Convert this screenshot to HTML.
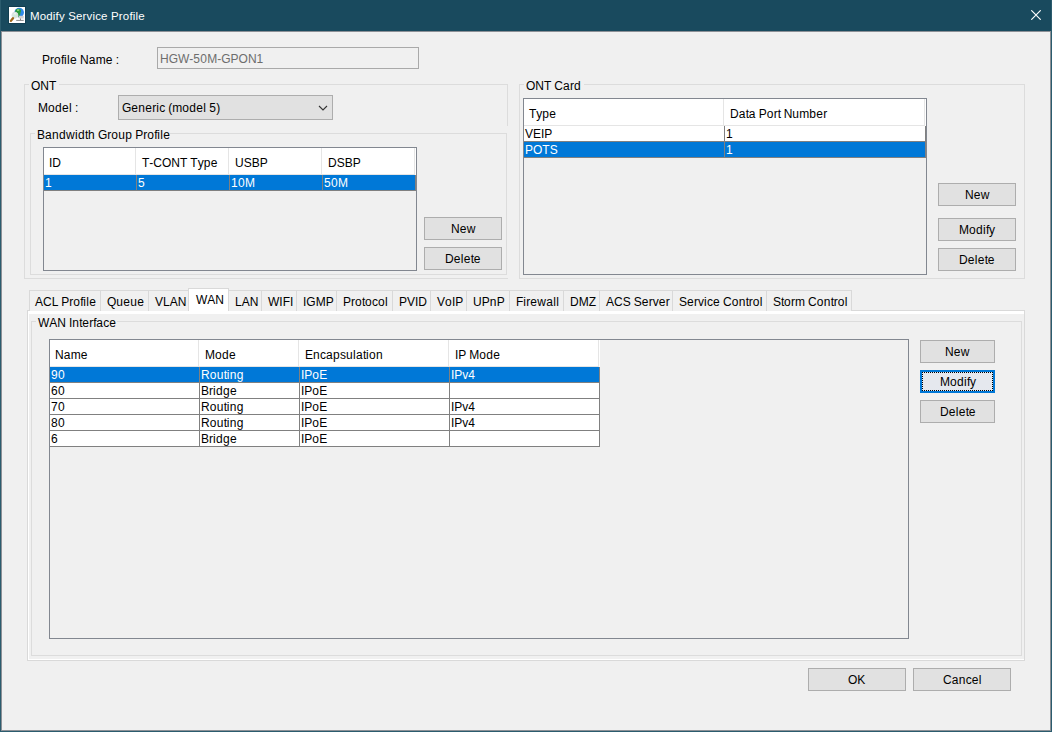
<!DOCTYPE html>
<html><head><meta charset="utf-8">
<style>
*{box-sizing:border-box;margin:0;padding:0}
html,body{width:1052px;height:732px;overflow:hidden;background:#f0f0f0;font-family:"Liberation Sans",sans-serif;font-size:12px;color:#000}
.a{position:absolute}
.t{position:absolute;line-height:14px;white-space:nowrap;font-kerning:none}
i{display:inline-block;font-style:normal;overflow:visible}
</style></head><body>
<div class="a" style="left:0px;top:0px;width:1052px;height:31px;background:#194a5e;"></div>
<div class="a" style="left:0px;top:0px;width:1px;height:732px;background:#2b5c6e;"></div>
<div class="a" style="left:1051px;top:0px;width:1px;height:732px;background:#2b5c6e;"></div>
<div class="a" style="left:0px;top:731px;width:1052px;height:1px;background:#2b5c6e;"></div>
<div class="a" style="left:1px;top:31px;width:1px;height:700px;background:#8c9096;"></div>
<div class="a" style="left:1050px;top:31px;width:1px;height:700px;background:#8c9096;"></div>
<div class="a" style="left:1px;top:31px;width:1050px;height:1px;background:#8c9096;"></div>
<div class="a" style="left:1px;top:730px;width:1050px;height:1px;background:#8c9096;"></div>
<svg class="a" style="left:8px;top:6px" width="18" height="18" viewBox="0 0 18 18">
<rect x="0" y="0" width="18" height="18" fill="#113e50"/>
<rect x="1" y="1" width="16" height="16" fill="#fff"/>
<circle cx="11.2" cy="6.6" r="4.8" fill="#2d8ae8"/>
<path d="M7.6 4.2 C8.6 3 10.2 2.6 11.6 2.9 C13 3.3 13.4 4.6 12.8 5.8 C12.3 6.8 12.6 7.6 12 8.8 C11.5 10 10.8 11 10.2 11.3 C9.6 10.4 9.2 9.6 8.4 9 C7.6 8.2 7.2 7 7.2 5.8 C7.2 5.2 7.3 4.6 7.6 4.2Z" fill="#2a9a3a"/>
<path d="M9 3.6 C10 3 11.2 3.1 11.6 3.8 C11.2 4.8 10.2 5.2 9.2 5Z" fill="#8ed67c"/>
<circle cx="6.9" cy="9.2" r="3" fill="#d2e8dc" stroke="#dfe4e6" stroke-width="1"/>
<path d="M5.8 8.2 C6.4 7.6 7.4 7.6 7.9 8.1" stroke="#fff" stroke-width="1" fill="none"/>
<path d="M5 12.2 L2.9 14.9" stroke="#a0681a" stroke-width="2.3" stroke-linecap="round"/>
<rect x="10.6" y="9.8" width="5.1" height="2.7" fill="#d0d0d0"/>
<rect x="12" y="12.5" width="1" height="1.4" fill="#777"/>
<rect x="8.2" y="13.9" width="7.5" height="0.9" fill="#7a7a7a"/>
</svg>
<div class="t" style="left:30px;top:9px;color:#fff;font-size:11.5px;letter-spacing:0.16px;">Modify Service Profile</div>
<svg class="a" style="left:1031px;top:10px" width="10" height="10" viewBox="0 0 10 10">
<path d="M0.3 0.3 L9.7 9.7 M9.7 0.3 L0.3 9.7" stroke="#fff" stroke-width="1.15"/>
</svg>
<div class="t" style="left:42px;top:53px;"><i style="width:8.004px">P</i><i style="width:4px">r</i><i style="width:7px">o</i><i style="width:3px">f</i><i style="width:3px">i</i><i style="width:3px">l</i><i style="width:7px">e</i><i style="width:3px">&nbsp;</i><i style="width:8.666px">N</i><i style="width:7px">a</i><i style="width:10px">m</i><i style="width:7px">e</i><i style="width:3px">&nbsp;</i><i style="width:3px">:</i></div>
<div class="a" style="left:157px;top:47px;width:262px;height:22px;border:1px solid #a9a9a9;background:#f0f0f0;"></div>
<div class="t" style="left:160px;top:52px;color:#6d6d6d;"><i style="width:8.666px">H</i><i style="width:9.334px">G</i><i style="width:11.326px">W</i><i style="width:4px">-</i><i style="width:7px">5</i><i style="width:7px">0</i><i style="width:9.996px">M</i><i style="width:4px">-</i><i style="width:9.334px">G</i><i style="width:8.004px">P</i><i style="width:9.334px">O</i><i style="width:8.666px">N</i><i style="width:7px">1</i></div>
<div class="a" style="left:24px;top:84px;width:484px;height:195px;border:1px solid #dcdcdc;"></div>
<div class="a" style="left:29px;top:84px;width:30px;height:1px;background:#f0f0f0;"></div>
<div class="t" style="left:31px;top:79px;"><i style="width:9.334px">O</i><i style="width:8.666px">N</i><i style="width:7.33px">T</i></div>
<div class="t" style="left:38px;top:101px;"><i style="width:9.996px">M</i><i style="width:7px">o</i><i style="width:7px">d</i><i style="width:7px">e</i><i style="width:3px">l</i><i style="width:3px">&nbsp;</i><i style="width:3px">:</i></div>
<div class="a" style="left:118px;top:95px;width:215px;height:25px;border:1px solid #adadad;background:#e1e1e1;"></div>
<div class="t" style="left:122px;top:101px;"><i style="width:9.334px">G</i><i style="width:7px">e</i><i style="width:7px">n</i><i style="width:7px">e</i><i style="width:4px">r</i><i style="width:3px">i</i><i style="width:6px">c</i><i style="width:3px">&nbsp;</i><i style="width:4px">(</i><i style="width:10px">m</i><i style="width:7px">o</i><i style="width:7px">d</i><i style="width:7px">e</i><i style="width:3px">l</i><i style="width:3px">&nbsp;</i><i style="width:7px">5</i><i style="width:4px">)</i></div>
<svg class="a" style="left:318px;top:105px" width="10" height="7" viewBox="0 0 10 7"><path d="M1 1 L5 5 L9 1" fill="none" stroke="#333" stroke-width="1.1"/></svg>
<div class="a" style="left:507px;top:126px;width:1px;height:152px;background:#f0f0f0;"></div>
<div class="a" style="left:30px;top:133px;width:477px;height:142px;border:1px solid #dcdcdc;"></div>
<div class="a" style="left:35px;top:133px;width:135px;height:1px;background:#f0f0f0;"></div>
<div class="t" style="left:37px;top:128px;"><i style="width:8.004px">B</i><i style="width:7px">a</i><i style="width:7px">n</i><i style="width:7px">d</i><i style="width:9px">w</i><i style="width:3px">i</i><i style="width:7px">d</i><i style="width:3px">t</i><i style="width:7px">h</i><i style="width:3px">&nbsp;</i><i style="width:9.334px">G</i><i style="width:4px">r</i><i style="width:7px">o</i><i style="width:7px">u</i><i style="width:7px">p</i><i style="width:3px">&nbsp;</i><i style="width:8.004px">P</i><i style="width:4px">r</i><i style="width:7px">o</i><i style="width:3px">f</i><i style="width:3px">i</i><i style="width:3px">l</i><i style="width:7px">e</i></div>
<div class="a" style="left:43px;top:147px;width:374px;height:124px;border:1px solid #828790;background:#f0f0f0;"></div>
<div class="a" style="left:44px;top:148px;width:372px;height:27px;background:#fff;"></div>
<div class="a" style="left:135px;top:148px;width:1px;height:26px;background:#e5e5e5;"></div>
<div class="t" style="left:49px;top:156px;"><i style="width:3.334px">I</i><i style="width:8.666px">D</i></div>
<div class="a" style="left:228px;top:148px;width:1px;height:26px;background:#e5e5e5;"></div>
<div class="t" style="left:142px;top:156px;"><i style="width:7.33px">T</i><i style="width:4px">-</i><i style="width:8.666px">C</i><i style="width:9.334px">O</i><i style="width:8.666px">N</i><i style="width:7.33px">T</i><i style="width:3px">&nbsp;</i><i style="width:7.33px">T</i><i style="width:6px">y</i><i style="width:7px">p</i><i style="width:7px">e</i></div>
<div class="a" style="left:321px;top:148px;width:1px;height:26px;background:#e5e5e5;"></div>
<div class="t" style="left:235px;top:156px;"><i style="width:8.666px">U</i><i style="width:8.004px">S</i><i style="width:8.004px">B</i><i style="width:8.004px">P</i></div>
<div class="a" style="left:414px;top:148px;width:1px;height:26px;background:#e5e5e5;"></div>
<div class="t" style="left:328px;top:156px;"><i style="width:8.666px">D</i><i style="width:8.004px">S</i><i style="width:8.004px">B</i><i style="width:8.004px">P</i></div>
<div class="a" style="left:44px;top:174px;width:371px;height:1px;background:#e5e5e5;"></div>
<div class="a" style="left:44px;top:175px;width:372px;height:16px;background:#0078d7;"></div>
<div class="a" style="left:136px;top:175px;width:1px;height:16px;background:#808080;"></div>
<div class="t" style="left:45px;top:176px;color:#fff;"><i style="width:7px">1</i></div>
<div class="a" style="left:229px;top:175px;width:1px;height:16px;background:#808080;"></div>
<div class="t" style="left:138px;top:176px;color:#fff;"><i style="width:7px">5</i></div>
<div class="a" style="left:322px;top:175px;width:1px;height:16px;background:#808080;"></div>
<div class="t" style="left:231px;top:176px;color:#fff;"><i style="width:7px">1</i><i style="width:7px">0</i><i style="width:9.996px">M</i></div>
<div class="a" style="left:415px;top:175px;width:1px;height:16px;background:#808080;"></div>
<div class="t" style="left:324px;top:176px;color:#fff;"><i style="width:7px">5</i><i style="width:7px">0</i><i style="width:9.996px">M</i></div>
<div class="a" style="left:44px;top:190px;width:372px;height:1px;background:#808080;"></div>
<div class="a" style="left:424px;top:217px;width:78px;height:23px;border:1px solid #adadad;background:#e1e1e1;"></div>
<div class="t" style="left:451px;top:222px;"><i style="width:8.666px">N</i><i style="width:7px">e</i><i style="width:9px">w</i></div>
<div class="a" style="left:424px;top:247px;width:78px;height:23px;border:1px solid #adadad;background:#e1e1e1;"></div>
<div class="t" style="left:445px;top:252px;"><i style="width:8.666px">D</i><i style="width:7px">e</i><i style="width:3px">l</i><i style="width:7px">e</i><i style="width:3px">t</i><i style="width:7px">e</i></div>
<div class="a" style="left:519px;top:84px;width:506px;height:195px;border:1px solid #dcdcdc;"></div>
<div class="a" style="left:524px;top:84px;width:60px;height:1px;background:#f0f0f0;"></div>
<div class="t" style="left:526px;top:79px;"><i style="width:9.334px">O</i><i style="width:8.666px">N</i><i style="width:7.33px">T</i><i style="width:3px">&nbsp;</i><i style="width:8.666px">C</i><i style="width:7px">a</i><i style="width:4px">r</i><i style="width:7px">d</i></div>
<div class="a" style="left:523px;top:98px;width:404px;height:177px;border:1px solid #828790;background:#f0f0f0;"></div>
<div class="a" style="left:524px;top:99px;width:402px;height:27px;background:#fff;"></div>
<div class="a" style="left:723px;top:99px;width:1px;height:26px;background:#e5e5e5;"></div>
<div class="t" style="left:529px;top:107px;"><i style="width:7.33px">T</i><i style="width:6px">y</i><i style="width:7px">p</i><i style="width:7px">e</i></div>
<div class="a" style="left:924px;top:99px;width:1px;height:26px;background:#e5e5e5;"></div>
<div class="t" style="left:730px;top:107px;"><i style="width:8.666px">D</i><i style="width:7px">a</i><i style="width:3px">t</i><i style="width:7px">a</i><i style="width:3px">&nbsp;</i><i style="width:8.004px">P</i><i style="width:7px">o</i><i style="width:4px">r</i><i style="width:3px">t</i><i style="width:3px">&nbsp;</i><i style="width:8.666px">N</i><i style="width:7px">u</i><i style="width:10px">m</i><i style="width:7px">b</i><i style="width:7px">e</i><i style="width:4px">r</i></div>
<div class="a" style="left:524px;top:125px;width:401px;height:1px;background:#e5e5e5;"></div>
<div class="a" style="left:524px;top:126px;width:402px;height:16px;background:#fff;"></div>
<div class="a" style="left:724px;top:126px;width:1px;height:16px;background:#808080;"></div>
<div class="t" style="left:525px;top:127px;color:#000;"><i style="width:8.004px">V</i><i style="width:8.004px">E</i><i style="width:3.334px">I</i><i style="width:8.004px">P</i></div>
<div class="a" style="left:925px;top:126px;width:1px;height:16px;background:#808080;"></div>
<div class="t" style="left:726px;top:127px;color:#000;"><i style="width:7px">1</i></div>
<div class="a" style="left:524px;top:141px;width:402px;height:1px;background:#808080;"></div>
<div class="a" style="left:524px;top:142px;width:402px;height:16px;background:#0078d7;"></div>
<div class="a" style="left:724px;top:142px;width:1px;height:16px;background:#808080;"></div>
<div class="t" style="left:525px;top:143px;color:#fff;"><i style="width:8.004px">P</i><i style="width:9.334px">O</i><i style="width:7.33px">T</i><i style="width:8.004px">S</i></div>
<div class="a" style="left:925px;top:142px;width:1px;height:16px;background:#808080;"></div>
<div class="t" style="left:726px;top:143px;color:#fff;"><i style="width:7px">1</i></div>
<div class="a" style="left:524px;top:157px;width:402px;height:1px;background:#808080;"></div>
<div class="a" style="left:938px;top:183px;width:78px;height:23px;border:1px solid #adadad;background:#e1e1e1;"></div>
<div class="t" style="left:965px;top:188px;"><i style="width:8.666px">N</i><i style="width:7px">e</i><i style="width:9px">w</i></div>
<div class="a" style="left:938px;top:218px;width:78px;height:23px;border:1px solid #adadad;background:#e1e1e1;"></div>
<div class="t" style="left:959px;top:223px;"><i style="width:9.996px">M</i><i style="width:7px">o</i><i style="width:7px">d</i><i style="width:3px">i</i><i style="width:3px">f</i><i style="width:6px">y</i></div>
<div class="a" style="left:938px;top:248px;width:78px;height:23px;border:1px solid #adadad;background:#e1e1e1;"></div>
<div class="t" style="left:959px;top:253px;"><i style="width:8.666px">D</i><i style="width:7px">e</i><i style="width:3px">l</i><i style="width:7px">e</i><i style="width:3px">t</i><i style="width:7px">e</i></div>
<div class="a" style="left:27px;top:310px;width:998px;height:351px;border:1px solid #d9d9d9;background:#f0f0f0;"></div>
<div class="a" style="left:28px;top:311px;width:996px;height:3px;background:#fff;"></div>
<div class="a" style="left:28px;top:311px;width:1px;height:349px;background:#fff;"></div>
<div class="a" style="left:28px;top:659px;width:996px;height:1px;background:#fff;"></div>
<div class="a" style="left:29px;top:290px;width:72px;height:21px;border:1px solid #d9d9d9;border-bottom:none;background:#f0f0f0"></div>
<div class="t" style="left:35px;top:295px;"><i style="width:8.004px">A</i><i style="width:8.666px">C</i><i style="width:6.674px">L</i><i style="width:3px">&nbsp;</i><i style="width:8.004px">P</i><i style="width:4px">r</i><i style="width:7px">o</i><i style="width:3px">f</i><i style="width:3px">i</i><i style="width:3px">l</i><i style="width:7px">e</i></div>
<div class="a" style="left:100px;top:290px;width:49px;height:21px;border:1px solid #d9d9d9;border-bottom:none;background:#f0f0f0"></div>
<div class="t" style="left:107px;top:295px;"><i style="width:9.334px">Q</i><i style="width:7px">u</i><i style="width:7px">e</i><i style="width:7px">u</i><i style="width:7px">e</i></div>
<div class="a" style="left:148px;top:290px;width:41px;height:21px;border:1px solid #d9d9d9;border-bottom:none;background:#f0f0f0"></div>
<div class="t" style="left:155px;top:295px;"><i style="width:8.004px">V</i><i style="width:6.674px">L</i><i style="width:8.004px">A</i><i style="width:8.666px">N</i></div>
<div class="a" style="left:228px;top:290px;width:34px;height:21px;border:1px solid #d9d9d9;border-bottom:none;background:#f0f0f0"></div>
<div class="t" style="left:235px;top:295px;"><i style="width:6.674px">L</i><i style="width:8.004px">A</i><i style="width:8.666px">N</i></div>
<div class="a" style="left:261px;top:290px;width:36px;height:21px;border:1px solid #d9d9d9;border-bottom:none;background:#f0f0f0"></div>
<div class="t" style="left:268px;top:295px;"><i style="width:11.326px">W</i><i style="width:3.334px">I</i><i style="width:7.33px">F</i><i style="width:3.334px">I</i></div>
<div class="a" style="left:296px;top:290px;width:41px;height:21px;border:1px solid #d9d9d9;border-bottom:none;background:#f0f0f0"></div>
<div class="t" style="left:303px;top:295px;"><i style="width:3.334px">I</i><i style="width:9.334px">G</i><i style="width:9.996px">M</i><i style="width:8.004px">P</i></div>
<div class="a" style="left:336px;top:290px;width:57px;height:21px;border:1px solid #d9d9d9;border-bottom:none;background:#f0f0f0"></div>
<div class="t" style="left:343px;top:295px;"><i style="width:8.004px">P</i><i style="width:4px">r</i><i style="width:7px">o</i><i style="width:3px">t</i><i style="width:7px">o</i><i style="width:6px">c</i><i style="width:7px">o</i><i style="width:3px">l</i></div>
<div class="a" style="left:392px;top:290px;width:39px;height:21px;border:1px solid #d9d9d9;border-bottom:none;background:#f0f0f0"></div>
<div class="t" style="left:399px;top:295px;"><i style="width:8.004px">P</i><i style="width:8.004px">V</i><i style="width:3.334px">I</i><i style="width:8.666px">D</i></div>
<div class="a" style="left:430px;top:290px;width:37px;height:21px;border:1px solid #d9d9d9;border-bottom:none;background:#f0f0f0"></div>
<div class="t" style="left:437px;top:295px;"><i style="width:8.004px">V</i><i style="width:7px">o</i><i style="width:3.334px">I</i><i style="width:8.004px">P</i></div>
<div class="a" style="left:466px;top:290px;width:44px;height:21px;border:1px solid #d9d9d9;border-bottom:none;background:#f0f0f0"></div>
<div class="t" style="left:473px;top:295px;"><i style="width:8.666px">U</i><i style="width:8.004px">P</i><i style="width:7px">n</i><i style="width:8.004px">P</i></div>
<div class="a" style="left:509px;top:290px;width:55px;height:21px;border:1px solid #d9d9d9;border-bottom:none;background:#f0f0f0"></div>
<div class="t" style="left:516px;top:295px;"><i style="width:7.33px">F</i><i style="width:3px">i</i><i style="width:4px">r</i><i style="width:7px">e</i><i style="width:9px">w</i><i style="width:7px">a</i><i style="width:3px">l</i><i style="width:3px">l</i></div>
<div class="a" style="left:563px;top:290px;width:37px;height:21px;border:1px solid #d9d9d9;border-bottom:none;background:#f0f0f0"></div>
<div class="t" style="left:570px;top:295px;"><i style="width:8.666px">D</i><i style="width:9.996px">M</i><i style="width:7.33px">Z</i></div>
<div class="a" style="left:599px;top:290px;width:74px;height:21px;border:1px solid #d9d9d9;border-bottom:none;background:#f0f0f0"></div>
<div class="t" style="left:606px;top:295px;"><i style="width:8.004px">A</i><i style="width:8.666px">C</i><i style="width:8.004px">S</i><i style="width:3px">&nbsp;</i><i style="width:8.004px">S</i><i style="width:7px">e</i><i style="width:4px">r</i><i style="width:6px">v</i><i style="width:7px">e</i><i style="width:4px">r</i></div>
<div class="a" style="left:672px;top:290px;width:95px;height:21px;border:1px solid #d9d9d9;border-bottom:none;background:#f0f0f0"></div>
<div class="t" style="left:679px;top:295px;"><i style="width:8.004px">S</i><i style="width:7px">e</i><i style="width:4px">r</i><i style="width:6px">v</i><i style="width:3px">i</i><i style="width:6px">c</i><i style="width:7px">e</i><i style="width:3px">&nbsp;</i><i style="width:8.666px">C</i><i style="width:7px">o</i><i style="width:7px">n</i><i style="width:3px">t</i><i style="width:4px">r</i><i style="width:7px">o</i><i style="width:3px">l</i></div>
<div class="a" style="left:766px;top:290px;width:86px;height:21px;border:1px solid #d9d9d9;border-bottom:none;background:#f0f0f0"></div>
<div class="t" style="left:773px;top:295px;"><i style="width:8.004px">S</i><i style="width:3px">t</i><i style="width:7px">o</i><i style="width:4px">r</i><i style="width:10px">m</i><i style="width:3px">&nbsp;</i><i style="width:8.666px">C</i><i style="width:7px">o</i><i style="width:7px">n</i><i style="width:3px">t</i><i style="width:4px">r</i><i style="width:7px">o</i><i style="width:3px">l</i></div>
<div class="a" style="left:188px;top:288px;width:41px;height:23px;border:1px solid #d9d9d9;border-bottom:none;background:#fff"></div>
<div class="t" style="left:196px;top:293px;"><i style="width:11.326px">W</i><i style="width:8.004px">A</i><i style="width:8.666px">N</i></div>
<div class="a" style="left:31px;top:321px;width:991px;height:335px;border:1px solid #dcdcdc;"></div>
<div class="a" style="left:36px;top:321px;width:81px;height:1px;background:#f0f0f0;"></div>
<div class="t" style="left:38px;top:316px;"><i style="width:11.326px">W</i><i style="width:8.004px">A</i><i style="width:8.666px">N</i><i style="width:3px">&nbsp;</i><i style="width:3.334px">I</i><i style="width:7px">n</i><i style="width:3px">t</i><i style="width:7px">e</i><i style="width:4px">r</i><i style="width:3px">f</i><i style="width:7px">a</i><i style="width:6px">c</i><i style="width:7px">e</i></div>
<div class="a" style="left:49px;top:339px;width:860px;height:300px;border:1px solid #828790;background:#f0f0f0;"></div>
<div class="a" style="left:50px;top:340px;width:550px;height:27px;background:#fff;"></div>
<div class="a" style="left:198px;top:340px;width:1px;height:26px;background:#e5e5e5;"></div>
<div class="t" style="left:55px;top:348px;"><i style="width:8.666px">N</i><i style="width:7px">a</i><i style="width:10px">m</i><i style="width:7px">e</i></div>
<div class="a" style="left:298px;top:340px;width:1px;height:26px;background:#e5e5e5;"></div>
<div class="t" style="left:205px;top:348px;"><i style="width:9.996px">M</i><i style="width:7px">o</i><i style="width:7px">d</i><i style="width:7px">e</i></div>
<div class="a" style="left:448px;top:340px;width:1px;height:26px;background:#e5e5e5;"></div>
<div class="t" style="left:305px;top:348px;"><i style="width:8.004px">E</i><i style="width:7px">n</i><i style="width:6px">c</i><i style="width:7px">a</i><i style="width:7px">p</i><i style="width:6px">s</i><i style="width:7px">u</i><i style="width:3px">l</i><i style="width:7px">a</i><i style="width:3px">t</i><i style="width:3px">i</i><i style="width:7px">o</i><i style="width:7px">n</i></div>
<div class="a" style="left:598px;top:340px;width:1px;height:26px;background:#e5e5e5;"></div>
<div class="t" style="left:455px;top:348px;"><i style="width:3.334px">I</i><i style="width:8.004px">P</i><i style="width:3px">&nbsp;</i><i style="width:9.996px">M</i><i style="width:7px">o</i><i style="width:7px">d</i><i style="width:7px">e</i></div>
<div class="a" style="left:50px;top:366px;width:549px;height:1px;background:#e5e5e5;"></div>
<div class="a" style="left:50px;top:367px;width:550px;height:16px;background:#0078d7;"></div>
<div class="a" style="left:199px;top:367px;width:1px;height:16px;background:#808080;"></div>
<div class="t" style="left:51px;top:368px;color:#fff;"><i style="width:7px">9</i><i style="width:7px">0</i></div>
<div class="a" style="left:299px;top:367px;width:1px;height:16px;background:#808080;"></div>
<div class="t" style="left:201px;top:368px;color:#fff;"><i style="width:8.666px">R</i><i style="width:7px">o</i><i style="width:7px">u</i><i style="width:3px">t</i><i style="width:3px">i</i><i style="width:7px">n</i><i style="width:7px">g</i></div>
<div class="a" style="left:449px;top:367px;width:1px;height:16px;background:#808080;"></div>
<div class="t" style="left:301px;top:368px;color:#fff;"><i style="width:3.334px">I</i><i style="width:8.004px">P</i><i style="width:7px">o</i><i style="width:8.004px">E</i></div>
<div class="a" style="left:599px;top:367px;width:1px;height:16px;background:#808080;"></div>
<div class="t" style="left:451px;top:368px;color:#fff;"><i style="width:3.334px">I</i><i style="width:8.004px">P</i><i style="width:6px">v</i><i style="width:7px">4</i></div>
<div class="a" style="left:50px;top:382px;width:550px;height:1px;background:#808080;"></div>
<div class="a" style="left:50px;top:383px;width:550px;height:16px;background:#fff;"></div>
<div class="a" style="left:199px;top:383px;width:1px;height:16px;background:#808080;"></div>
<div class="t" style="left:51px;top:384px;color:#000;"><i style="width:7px">6</i><i style="width:7px">0</i></div>
<div class="a" style="left:299px;top:383px;width:1px;height:16px;background:#808080;"></div>
<div class="t" style="left:201px;top:384px;color:#000;"><i style="width:8.004px">B</i><i style="width:4px">r</i><i style="width:3px">i</i><i style="width:7px">d</i><i style="width:7px">g</i><i style="width:7px">e</i></div>
<div class="a" style="left:449px;top:383px;width:1px;height:16px;background:#808080;"></div>
<div class="t" style="left:301px;top:384px;color:#000;"><i style="width:3.334px">I</i><i style="width:8.004px">P</i><i style="width:7px">o</i><i style="width:8.004px">E</i></div>
<div class="a" style="left:599px;top:383px;width:1px;height:16px;background:#808080;"></div>
<div class="a" style="left:50px;top:398px;width:550px;height:1px;background:#808080;"></div>
<div class="a" style="left:50px;top:399px;width:550px;height:16px;background:#fff;"></div>
<div class="a" style="left:199px;top:399px;width:1px;height:16px;background:#808080;"></div>
<div class="t" style="left:51px;top:400px;color:#000;"><i style="width:7px">7</i><i style="width:7px">0</i></div>
<div class="a" style="left:299px;top:399px;width:1px;height:16px;background:#808080;"></div>
<div class="t" style="left:201px;top:400px;color:#000;"><i style="width:8.666px">R</i><i style="width:7px">o</i><i style="width:7px">u</i><i style="width:3px">t</i><i style="width:3px">i</i><i style="width:7px">n</i><i style="width:7px">g</i></div>
<div class="a" style="left:449px;top:399px;width:1px;height:16px;background:#808080;"></div>
<div class="t" style="left:301px;top:400px;color:#000;"><i style="width:3.334px">I</i><i style="width:8.004px">P</i><i style="width:7px">o</i><i style="width:8.004px">E</i></div>
<div class="a" style="left:599px;top:399px;width:1px;height:16px;background:#808080;"></div>
<div class="t" style="left:451px;top:400px;color:#000;"><i style="width:3.334px">I</i><i style="width:8.004px">P</i><i style="width:6px">v</i><i style="width:7px">4</i></div>
<div class="a" style="left:50px;top:414px;width:550px;height:1px;background:#808080;"></div>
<div class="a" style="left:50px;top:415px;width:550px;height:16px;background:#fff;"></div>
<div class="a" style="left:199px;top:415px;width:1px;height:16px;background:#808080;"></div>
<div class="t" style="left:51px;top:416px;color:#000;"><i style="width:7px">8</i><i style="width:7px">0</i></div>
<div class="a" style="left:299px;top:415px;width:1px;height:16px;background:#808080;"></div>
<div class="t" style="left:201px;top:416px;color:#000;"><i style="width:8.666px">R</i><i style="width:7px">o</i><i style="width:7px">u</i><i style="width:3px">t</i><i style="width:3px">i</i><i style="width:7px">n</i><i style="width:7px">g</i></div>
<div class="a" style="left:449px;top:415px;width:1px;height:16px;background:#808080;"></div>
<div class="t" style="left:301px;top:416px;color:#000;"><i style="width:3.334px">I</i><i style="width:8.004px">P</i><i style="width:7px">o</i><i style="width:8.004px">E</i></div>
<div class="a" style="left:599px;top:415px;width:1px;height:16px;background:#808080;"></div>
<div class="t" style="left:451px;top:416px;color:#000;"><i style="width:3.334px">I</i><i style="width:8.004px">P</i><i style="width:6px">v</i><i style="width:7px">4</i></div>
<div class="a" style="left:50px;top:430px;width:550px;height:1px;background:#808080;"></div>
<div class="a" style="left:50px;top:431px;width:550px;height:16px;background:#fff;"></div>
<div class="a" style="left:199px;top:431px;width:1px;height:16px;background:#808080;"></div>
<div class="t" style="left:51px;top:432px;color:#000;"><i style="width:7px">6</i></div>
<div class="a" style="left:299px;top:431px;width:1px;height:16px;background:#808080;"></div>
<div class="t" style="left:201px;top:432px;color:#000;"><i style="width:8.004px">B</i><i style="width:4px">r</i><i style="width:3px">i</i><i style="width:7px">d</i><i style="width:7px">g</i><i style="width:7px">e</i></div>
<div class="a" style="left:449px;top:431px;width:1px;height:16px;background:#808080;"></div>
<div class="t" style="left:301px;top:432px;color:#000;"><i style="width:3.334px">I</i><i style="width:8.004px">P</i><i style="width:7px">o</i><i style="width:8.004px">E</i></div>
<div class="a" style="left:599px;top:431px;width:1px;height:16px;background:#808080;"></div>
<div class="a" style="left:50px;top:446px;width:550px;height:1px;background:#808080;"></div>
<div class="a" style="left:920px;top:340px;width:75px;height:23px;border:1px solid #adadad;background:#e1e1e1;"></div>
<div class="t" style="left:945px;top:345px;"><i style="width:8.666px">N</i><i style="width:7px">e</i><i style="width:9px">w</i></div>
<div class="a" style="left:920px;top:370px;width:75px;height:23px;border:2px solid #0078d7;background:#e5e8ee"></div>
<div class="a" style="left:922px;top:372px;width:71px;height:19px;border:1px dotted #000"></div>
<div class="t" style="left:940px;top:375px;"><i style="width:9.996px">M</i><i style="width:7px">o</i><i style="width:7px">d</i><i style="width:3px">i</i><i style="width:3px">f</i><i style="width:6px">y</i></div>
<div class="a" style="left:920px;top:400px;width:75px;height:23px;border:1px solid #adadad;background:#e1e1e1;"></div>
<div class="t" style="left:940px;top:405px;"><i style="width:8.666px">D</i><i style="width:7px">e</i><i style="width:3px">l</i><i style="width:7px">e</i><i style="width:3px">t</i><i style="width:7px">e</i></div>
<div class="a" style="left:808px;top:668px;width:98px;height:23px;border:1px solid #adadad;background:#e1e1e1;"></div>
<div class="t" style="left:848px;top:673px;"><i style="width:9.334px">O</i><i style="width:8.004px">K</i></div>
<div class="a" style="left:913px;top:668px;width:98px;height:23px;border:1px solid #adadad;background:#e1e1e1;"></div>
<div class="t" style="left:943px;top:673px;"><i style="width:8.666px">C</i><i style="width:7px">a</i><i style="width:7px">n</i><i style="width:6px">c</i><i style="width:7px">e</i><i style="width:3px">l</i></div>
</body></html>
